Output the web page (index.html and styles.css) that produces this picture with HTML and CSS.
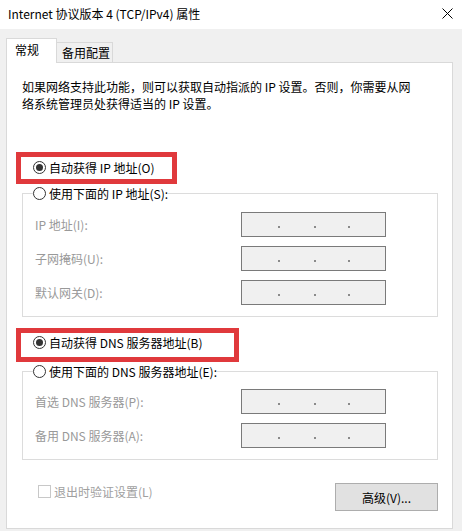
FILE: index.html
```html
<!DOCTYPE html>
<html lang="zh-CN">
<head>
<meta charset="utf-8">
<title>Internet 协议版本 4 (TCP/IPv4) 属性</title>
<link rel="stylesheet" href="styles.css">
</head>
<body>
<div class="titlebar">
  <span class="title">Internet 协议版本 4 (TCP/IPv4) 属性</span>
  <span class="close"><svg width="11" height="11" viewBox="0 0 11 11"><path d="M0.5 0.5L10.5 10.5M10.5 0.5L0.5 10.5" stroke="#000" stroke-width="1" fill="none"/></svg></span>
</div>
<div class="tabs">
  <div class="tab active">常规</div>
  <div class="tab">备用配置</div>
</div>
<div class="panel">
  <p class="desc">如果网络支持此功能，则可以获取自动指派的 IP 设置。否则，你需要从网络系统管理员处获得适当的 IP 设置。</p>

  <div class="radio-row auto-ip">
    <span class="radio checked"></span><span>自动获得 IP 地址(O)</span>
    <span class="mark mark-ip"></span>
  </div>
  <fieldset class="group group-ip">
    <legend class="radio-row"><span class="radio"></span><span>使用下面的 IP 地址(S):</span></legend>
    <div class="field first"><span class="label">IP 地址(I):</span><span class="ipbox"><i></i><i></i><i></i></span></div>
    <div class="field"><span class="label">子网掩码(U):</span><span class="ipbox"><i></i><i></i><i></i></span></div>
    <div class="field"><span class="label">默认网关(D):</span><span class="ipbox"><i></i><i></i><i></i></span></div>
  </fieldset>

  <div class="radio-row auto-dns">
    <span class="radio checked"></span><span>自动获得 DNS 服务器地址(B)</span>
    <span class="mark mark-dns"></span>
  </div>
  <fieldset class="group group-dns">
    <legend class="radio-row"><span class="radio"></span><span>使用下面的 DNS 服务器地址(E):</span></legend>
    <div class="field first"><span class="label">首选 DNS 服务器(P):</span><span class="ipbox"><i></i><i></i><i></i></span></div>
    <div class="field"><span class="label">备用 DNS 服务器(A):</span><span class="ipbox"><i></i><i></i><i></i></span></div>
  </fieldset>

  <div class="footer">
    <label class="check"><span class="box"></span>退出时验证设置(L)</label>
    <button class="btn" type="button">高级(V)...</button>
  </div>
</div>
</body>
</html>
```
FILE: styles.css
```css
* { box-sizing: border-box; }
html, body { margin: 0; padding: 0; }
body {
  width: 462px;
  height: 531px;
  overflow: hidden;
  background: #f0f0f0;
  font-family: "Noto Sans CJK SC", "Noto Sans", sans-serif;
  font-size: 12px;
  color: #000;
}
.titlebar {
  height: 29px;
  background: #fff;
  display: flex;
  align-items: center;
  justify-content: space-between;
  padding-left: 8px;
}
.title { line-height: 17px; margin-top: -2px; }
.close {
  width: 30px;
  height: 29px;
  display: flex;
  align-items: center;
  justify-content: center;
  padding-bottom: 3px;
}
.close svg { display: block; }

.tabs {
  display: flex;
  align-items: flex-start;
  height: 24px;
  margin-top: 9px;
  padding-left: 6px;
}
.tab {
  height: 20px;
  width: 56px;
  margin-top: 4px;
  padding-left: 5px;
  border: 1px solid #d9d9d9;
  border-left: none;
  border-bottom: none;
  line-height: 19px;
  background: #f0f0f0;
}
.tab.active {
  position: relative;
  z-index: 1;
  width: 51px;
  height: 25px;
  margin-top: 0;
  margin-bottom: -1px;
  padding-left: 8px;
  border-left: 1px solid #d9d9d9;
  line-height: 22px;
  background: #fff;
}

.panel {
  position: relative;
  margin-left: 6px;
  width: 447px;
  height: 467px;
  border: 1px solid #d9d9d9;
  background: #fff;
}
.desc {
  margin: 15px 0 0 15px;
  width: 400px;
  line-height: 17px;
}

.radio-row {
  display: flex;
  align-items: center;
  height: 17px;
  line-height: 17px;
  white-space: nowrap;
}
.radio {
  width: 13px;
  height: 13px;
  border: 1px solid #333;
  border-radius: 50%;
  background: #fff;
  margin-right: 3px;
  display: flex;
  align-items: center;
  justify-content: center;
  flex: none;
}
.radio.checked::after {
  content: "";
  width: 7px;
  height: 7px;
  border-radius: 50%;
  background: #333;
}
.auto-ip {
  position: relative;
  margin: 47px 0 0 26px;
}
.auto-dns {
  position: relative;
  margin: 17px 0 0 26px;
}
.mark {
  position: absolute;
  border: 5px solid #e0393c;
  left: -17px;
}
.mark-ip { top: -7px; width: 161px; height: 32px; }
.mark-dns { top: -6px; width: 223px; height: 34px; }

.group {
  margin: 9px 0 0 15px;
  width: 416px;
  min-width: 0;
  border: 1px solid #dcdcdc;
  padding: 0 0 11px 10px;
}
.group legend { padding: 0; }
.group-dns { margin-top: 12px; }
.field {
  display: flex;
  align-items: center;
  height: 25px;
  margin-top: 9px;
}
.group-ip .field.first { margin-top: 10px; }
.group-dns .field.first { margin-top: 9px; }
.label {
  width: 206px;
  margin-left: 2px;
  color: #999;
  white-space: nowrap;
}
.ipbox {
  width: 145px;
  height: 25px;
  border: 1px solid #7a7a7a;
  background: #f0f0f0;
  display: flex;
  align-items: center;
  padding-top: 5px;
}
.ipbox i {
  width: 2px;
  height: 2px;
  background: #8a8a8a;
  margin-left: 32px;
}
.ipbox i:first-child { margin-left: 36px; }
.ipbox i:nth-child(2) { margin-left: 34px; }

.footer {
  display: flex;
  justify-content: space-between;
  align-items: flex-start;
  margin-top: 23px;
  padding: 0 14px 0 31px;
}
.check {
  display: flex;
  align-items: center;
  margin-top: 1px;
  height: 15px;
  color: #a0a0a0;
  line-height: 15px;
}
.check .box {
  width: 13px;
  height: 13px;
  border: 1px solid #c8c8c8;
  background: #fff;
  margin-right: 3px;
}
.btn {
  width: 103px;
  height: 28px;
  padding: 0;
  border: 1px solid #adadad;
  background: #e1e1e1;
  font: inherit;
  color: #000;
}
```
